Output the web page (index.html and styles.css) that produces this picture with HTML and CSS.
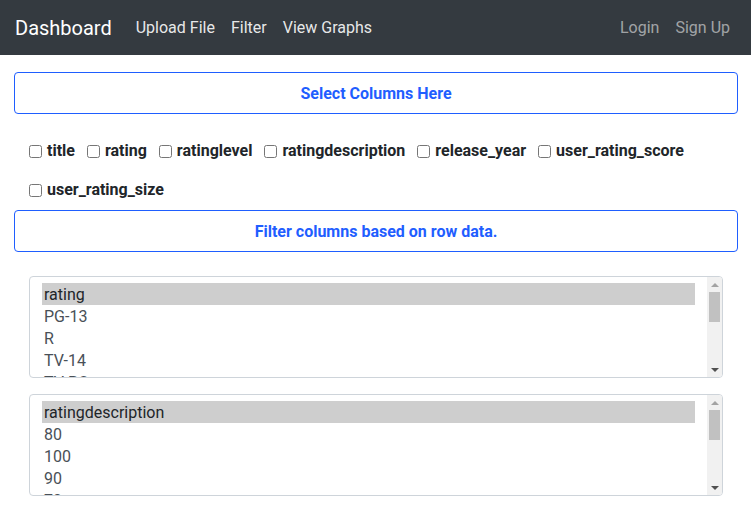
FILE: index.html
```html
<!DOCTYPE html>
<html lang="en">
<head>
<meta charset="utf-8">
<title>Dashboard</title>
<link rel="stylesheet" href="styles.css">
</head>
<body>
<nav class="navbar">
  <a class="brand" href="#">Dashboard</a>
  <ul class="nav-main">
    <li><a class="nav-link" href="#">Upload File</a></li>
    <li><a class="nav-link" href="#">Filter</a></li>
    <li><a class="nav-link" href="#">View Graphs</a></li>
  </ul>
  <ul class="nav-right">
    <li><a class="nav-link muted" href="#">Login</a></li>
    <li><a class="nav-link muted" href="#">Sign Up</a></li>
  </ul>
</nav>
<main class="container">
  <button class="btn-outline" type="button">Select Columns Here</button>
  <div class="checks">
    <label class="check"><input type="checkbox"><span>title</span></label>
    <label class="check"><input type="checkbox"><span>rating</span></label>
    <label class="check"><input type="checkbox"><span>ratinglevel</span></label>
    <label class="check"><input type="checkbox"><span>ratingdescription</span></label>
    <label class="check"><input type="checkbox"><span>release_year</span></label>
    <label class="check"><input type="checkbox"><span>user_rating_score</span></label>
    <label class="check"><input type="checkbox"><span>user_rating_size</span></label>
  </div>
  <button class="btn-outline" type="button">Filter columns based on row data.</button>
  <div class="lists">
    <div class="listbox">
      <div class="items">
        <div class="opt selected">rating</div>
        <div class="opt">PG-13</div>
        <div class="opt">R</div>
        <div class="opt">TV-14</div>
        <div class="opt">TV-PG</div>
        <div class="opt">TV-MA</div>
        <div class="opt">TV-Y</div>
        <div class="opt">TV-Y7</div>
        <div class="opt">NR</div>
        <div class="opt">G</div>
      </div>
      <div class="scrollbar" aria-hidden="true">
        <span class="arrow up"></span>
        <span class="thumb"></span>
        <span class="arrow down"></span>
      </div>
    </div>
    <div class="listbox">
      <div class="items">
        <div class="opt selected">ratingdescription</div>
        <div class="opt">80</div>
        <div class="opt">100</div>
        <div class="opt">90</div>
        <div class="opt">70</div>
        <div class="opt">110</div>
        <div class="opt">124</div>
        <div class="opt">35</div>
        <div class="opt">10</div>
        <div class="opt">60</div>
      </div>
      <div class="scrollbar" aria-hidden="true">
        <span class="arrow up"></span>
        <span class="thumb"></span>
        <span class="arrow down"></span>
      </div>
    </div>
  </div>
</main>
</body>
</html>
```

FILE: styles.css
```css
* { box-sizing: border-box; }
html, body { margin: 0; padding: 0; }
body {
  font-family: Roboto, "Noto Sans", "Liberation Sans", sans-serif;
  font-size: 16px;
  line-height: 1.5;
  color: #212529;
  background: #fff;
}
a { text-decoration: none; }
ul { list-style: none; margin: 0; padding: 0; }

.navbar {
  height: 55px;
  background: #343a40;
  display: flex;
  align-items: center;
  padding: 0 13px 0 15px;
}
.brand {
  font-size: 20px;
  line-height: 30px;
  color: #fff;
  margin-right: 16px;
}
.nav-main, .nav-right { display: flex; }
.nav-right { margin-left: auto; }
.nav-link {
  display: block;
  padding: 8px 8px;
  color: rgba(255, 255, 255, 0.9);
}
.nav-link.muted { color: rgba(255, 255, 255, 0.55); }

.container {
  padding: 17px 13px 0 14px;
}
.btn-outline {
  display: block;
  width: 100%;
  height: 42px;
  font-family: inherit;
  font-size: 16px;
  font-weight: 700;
  line-height: 24px;
  color: #1f5eff;
  background: #fff;
  border: 1px solid #1f5eff;
  border-radius: 4px;
  padding: 9px 12px 7px;
  cursor: pointer;
}
.checks {
  display: flex;
  flex-wrap: wrap;
  column-gap: 12px;
  row-gap: 15px;
  padding: 25px 15px 8px;
}
.check {
  display: flex;
  align-items: center;
  font-weight: 700;
  line-height: 24px;
}
.check input {
  width: 13px;
  height: 13px;
  margin: 0 5px 0 0;
}

.lists {
  display: flex;
  flex-direction: column;
  gap: 16px;
  padding: 24px 15px 0;
}
.listbox {
  display: flex;
  height: 102px;
  border: 1px solid #ced4da;
  border-radius: 4px;
  overflow: hidden;
  color: #495057;
}
.items {
  flex: 1;
  min-width: 0;
  overflow: hidden;
  padding: 6px 12px;
}
.opt {
  height: 22px;
  line-height: 21px;
  padding: 1px 2px 0;
  white-space: nowrap;
}
.opt.selected {
  background: #cecece;
  color: #212529;
}
.scrollbar {
  width: 15px;
  flex: none;
  background: #f1f1f1;
  display: flex;
  flex-direction: column;
  align-items: center;
}
.arrow {
  width: 15px;
  height: 15px;
  flex: none;
  display: flex;
  align-items: center;
  justify-content: center;
}
.arrow::before {
  content: "";
  width: 0;
  height: 0;
  border-left: 4px solid transparent;
  border-right: 4px solid transparent;
}
.arrow.up::before { border-bottom: 4px solid #a3a3a3; }
.arrow.down { margin-top: auto; }
.arrow.down::before { border-top: 4px solid #505050; }
.thumb {
  width: 11px;
  height: 30px;
  background: #c1c1c1;
}
```
